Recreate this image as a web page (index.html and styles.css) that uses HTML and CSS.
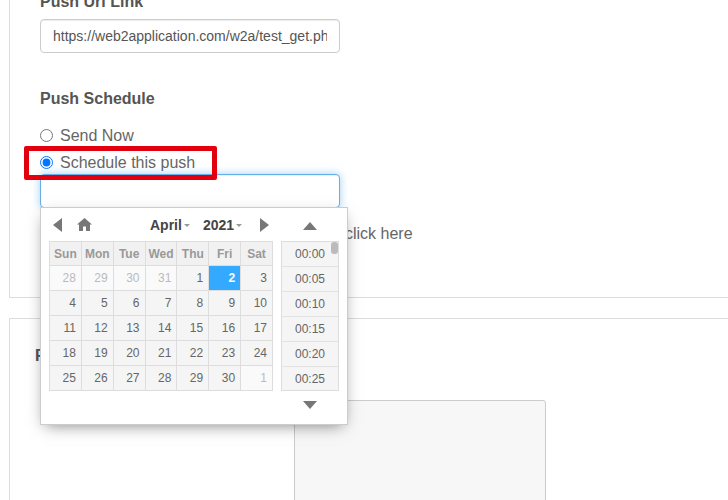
FILE: index.html
```html
<!DOCTYPE html>
<html lang="en">
<head>
<meta charset="UTF-8">
<meta name="viewport" content="width=device-width, initial-scale=1.0">
<title>Push Notification</title>
<link rel="stylesheet" href="styles.css">
</head>
<body>
    <div class="panel panel-top">
        <label class="field-title url-title" for="pushUrl">Push Url Link</label>
        <input class="text-input" id="pushUrl" type="text" value="https://web2application.com/w2a/test_get.php">

        <h4 class="field-title schedule-title">Push Schedule</h4>
        <label class="radio-row"><input type="radio" name="schedule"> Send Now</label>
        <label class="radio-row"><input type="radio" name="schedule" checked> Schedule this push</label>
        <input class="text-input is-focused" type="text">
        <p class="click-line">click here</p>

        <!-- red marker drawn over the radio row -->
        <div class="marker"></div>

        <div class="picker">
            <div class="picker-date">
                <div class="picker-nav">
                    <svg class="nav-prev" width="9" height="14" viewBox="0 0 9 14"><path d="M9 0V14L0 7Z"/></svg>
                    <svg class="nav-home" width="15" height="13" viewBox="0 0 15 13"><path d="M7.5 0L15 6.6H13V13H9V8.5H6V13H2V6.6H0Z"/></svg>
                    <span class="nav-select nav-month">April<i class="caret"></i></span>
                    <span class="nav-select nav-year">2021<i class="caret"></i></span>
                    <svg class="nav-next" width="9" height="14" viewBox="0 0 9 14"><path d="M0 0V14L9 7Z"/></svg>
                </div>
                <table class="calendar">
                    <thead>
                        <tr><th>Sun</th><th>Mon</th><th>Tue</th><th>Wed</th><th>Thu</th><th>Fri</th><th>Sat</th></tr>
                    </thead>
                    <tbody>
                        <tr><td class="other">28</td><td class="other">29</td><td class="other">30</td><td class="other">31</td><td>1</td><td class="today">2</td><td>3</td></tr>
                        <tr><td>4</td><td>5</td><td>6</td><td>7</td><td>8</td><td>9</td><td>10</td></tr>
                        <tr><td>11</td><td>12</td><td>13</td><td>14</td><td>15</td><td>16</td><td>17</td></tr>
                        <tr><td>18</td><td>19</td><td>20</td><td>21</td><td>22</td><td>23</td><td>24</td></tr>
                        <tr><td>25</td><td>26</td><td>27</td><td>28</td><td>29</td><td>30</td><td class="other">1</td></tr>
                    </tbody>
                </table>
            </div>
            <div class="picker-time">
                <div class="time-arrow arrow-up"><svg width="14" height="8" viewBox="0 0 14 8"><path d="M7 0L14 8H0Z"/></svg></div>
                <div class="time-list">
                    <div class="time-item">00:00</div>
                    <div class="time-item">00:05</div>
                    <div class="time-item">00:10</div>
                    <div class="time-item">00:15</div>
                    <div class="time-item">00:20</div>
                    <div class="time-item">00:25</div>
                    <div class="time-thumb"></div>
                </div>
                <div class="time-arrow arrow-down"><svg width="14" height="8" viewBox="0 0 14 8"><path d="M0 0H14L7 8Z"/></svg></div>
            </div>
        </div>
    </div>

    <div class="panel panel-bottom">
        <div class="bottom-label">F</div>
        <div class="preview-box"></div>
    </div>
</body>
</html>
```

FILE: styles.css
```css
html, body {
    height: 500px;
    overflow: hidden;
}

body {
    font-family: "Liberation Sans", Arial, sans-serif;
    margin: 0;
    padding: 0;
    background-color: #fff;
    color: #555;
}

.panel {
    margin-left: 9px;
    border-left: 1px solid #ddd;
}

.panel-top {
    position: relative;
    display: flow-root;
    height: 298px;
    box-sizing: border-box;
    padding: 0 0 0 30px;
    border-bottom: 1px solid #ddd;
}

.field-title {
    display: block;
    margin: 0;
    font-size: 16px;
    font-weight: bold;
    line-height: 20px;
    color: #555;
}

.url-title {
    margin-top: -8px;
    height: 27px;
}

.schedule-title {
    margin-top: 36px;
    margin-bottom: 13px;
}

.text-input {
    display: block;
    box-sizing: border-box;
    width: 300px;
    height: 34px;
    padding: 6px 12px;
    border: 1px solid #ccc;
    border-radius: 4px;
    box-shadow: inset 0 1px 1px rgba(0,0,0,.075);
    font-family: inherit;
    font-size: 14px;
    color: #555;
    outline: none;
}

.is-focused {
    border-color: #66afe9;
    box-shadow: inset 0 1px 1px rgba(0,0,0,.075), 0 0 8px rgba(102,175,233,.6);
}

.radio-row {
    display: flex;
    align-items: center;
    gap: 7px;
    height: 27px;
    font-size: 16px;
    color: #666;
}

.radio-row input {
    margin: 0;
}

.radio-row + .text-input {
    margin-top: -2px;
}

.click-line {
    margin: 16px 0 0;
    padding-left: 305px;
    font-size: 16px;
    line-height: 20px;
    color: #666;
}

.marker {
    position: absolute;
    left: 14px;
    top: 146px;
    width: 193px;
    height: 34px;
    box-sizing: border-box;
    border: 5px solid #e2000f;
    border-radius: 2px;
}

/* date and time popup */
.picker {
    position: absolute;
    left: 30px;
    top: 207px;
    display: flex;
    gap: 8px;
    box-sizing: border-box;
    width: 308px;
    height: 218px;
    padding: 0 8px;
    background-color: #fff;
    border: 1px solid #ccc;
    box-shadow: 0 5px 15px -5px rgba(0,0,0,.5);
    z-index: 5;
}

.picker svg {
    display: block;
    fill: #777;
}

.picker-date {
    width: 224px;
}

.picker-nav {
    display: flex;
    align-items: center;
    height: 33px;
}

.nav-prev {
    margin-left: 4px;
}

.nav-home {
    margin-left: 15px;
}

.nav-select {
    font-size: 14px;
    font-weight: bold;
    color: #444;
}

.nav-month {
    margin-left: 58px;
}

.nav-year {
    margin-left: 13px;
}

.nav-next {
    margin-left: 18px;
}

.caret {
    display: inline-block;
    margin-left: 2px;
    vertical-align: middle;
    border-top: 3px solid #999;
    border-left: 3px solid transparent;
    border-right: 3px solid transparent;
}

.calendar {
    table-layout: fixed;
    width: 224px;
    border-collapse: separate;
    border-spacing: 0;
    font-size: 12px;
    border-top: 1px solid #ddd;
    border-left: 1px solid #ddd;
}

.calendar th,
.calendar td {
    height: 25px;
    padding: 0;
    box-sizing: border-box;
    border-right: 1px solid #ddd;
    border-bottom: 1px solid #ddd;
    background-color: #f5f5f5;
}

.calendar th {
    height: 24px;
    background-color: #f1f1f1;
    color: #999;
    font-weight: bold;
    text-align: center;
}

.calendar td {
    padding-right: 5px;
    color: #666;
    text-align: right;
}

.calendar td.other {
    background-color: #fafafa;
    color: #bbb;
}

.calendar td.today {
    background-color: #33aaff;
    color: #fff;
    font-weight: bold;
}

.picker-time {
    width: 58px;
}

.time-arrow {
    display: flex;
    justify-content: center;
}

.arrow-up {
    height: 33px;
    padding-top: 14px;
    box-sizing: border-box;
}

.arrow-down {
    padding-top: 10px;
}

.time-list {
    position: relative;
    height: 150px;
    box-sizing: border-box;
    overflow: hidden;
    background-color: #f5f5f5;
    border: 1px solid #ddd;
}

.time-item {
    height: 25px;
    box-sizing: border-box;
    border-bottom: 1px solid #e2e2e2;
    font-size: 12px;
    line-height: 24px;
    text-align: center;
    color: #666;
}

.time-thumb {
    position: absolute;
    right: 0;
    top: 0;
    width: 7px;
    height: 12px;
    border-radius: 3px;
    background-color: #bbb;
}

/* second panel, mostly covered by the popup */
.panel-bottom {
    display: flex;
    margin-top: 20px;
    height: 182px;
    padding-left: 25px;
    border-top: 1px solid #ddd;
}

.bottom-label {
    margin-top: 27px;
    font-size: 16px;
    font-weight: bold;
    line-height: 20px;
    color: #555;
}

.preview-box {
    margin-top: 81px;
    margin-left: 249px;
    width: 252px;
    height: 120px;
    box-sizing: border-box;
    background-color: #f7f7f7;
    border: 1px solid #ccc;
    border-radius: 3px;
}
```
